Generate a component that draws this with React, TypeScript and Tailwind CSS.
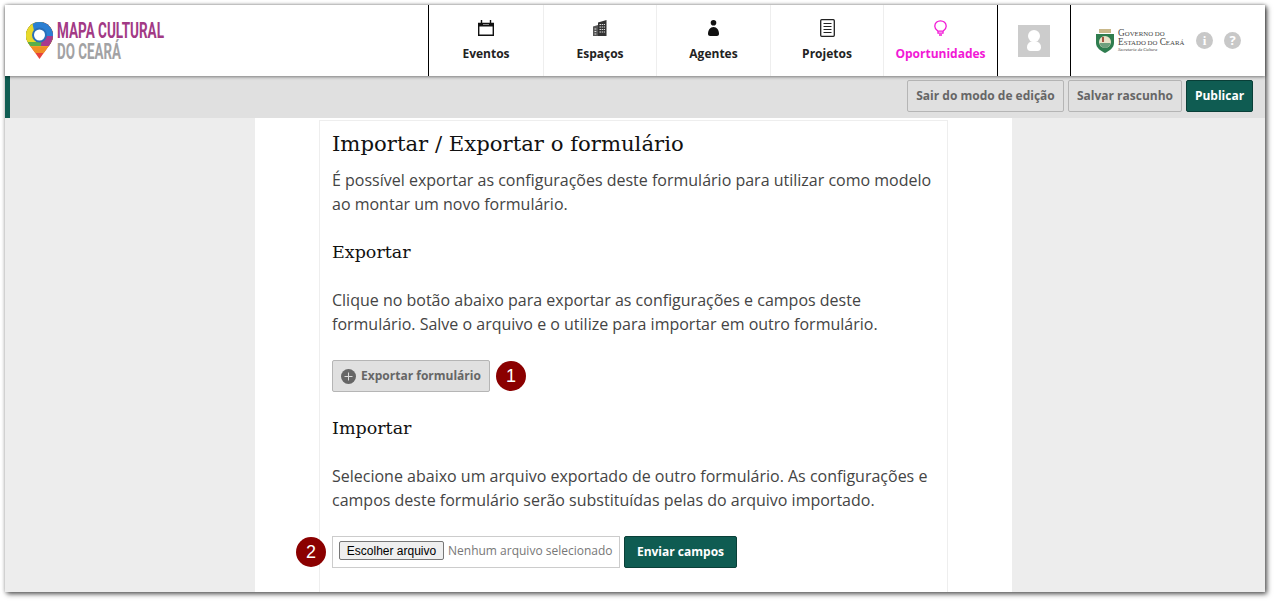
const navItems = [
  { label: "Eventos", icon: <CalendarIcon />, width: "w-[115px]" },
  { label: "Espaços", icon: <BuildingIcon />, width: "w-[113px]" },
  { label: "Agentes", icon: <PersonIcon />, width: "w-[114px]" },
  { label: "Projetos", icon: <DocIcon />, width: "w-[113px]" },
];

function CalendarIcon() {
  return (
    <svg width="16" height="16" viewBox="0 0 16 16" fill="none" stroke="#111">
      <path d="M.7 3.500h14.600v11.800H.7z" strokeWidth="1.400" />
      <path d="M.5 3.500h15v3H.5z" fill="#111" stroke="none" />
      <path d="M3.500 0v5M12.500 0v5" strokeWidth="1.400" />
      <path d="M5 4.500h6" stroke="#888" strokeWidth="1" />
    </svg>
  );
}

function BuildingIcon() {
  return (
    <svg width="14" height="16" viewBox="0 0 14 16" fill="none">
      <path d="M5 16V2.500L13.500 0v16z" fill="#333" />
      <path d="M0 16V6.500L5 5v11z" fill="#555" />
      <path d="M6.500 4.500h5.500M6.500 7h5.500M6.500 9.500h5.500M6.500 12h5.500M1.500 9h2.500M1.500 11.500h2.500M1.500 14h2.500" stroke="#ddd" strokeWidth="1" strokeDasharray="1.500 .7" />
    </svg>
  );
}

function PersonIcon() {
  return (
    <svg width="11" height="16" viewBox="0 0 11 16" fill="#111">
      <circle cx="5.500" cy="2.800" r="2.800" />
      <path d="M5.500 7c3.300 0 5.500 3 5.500 7 0 1.200-1 2-2 2H2c-1 0-2-.8-2-2 0-4 2.200-7 5.500-7z" />
    </svg>
  );
}

function DocIcon() {
  return (
    <svg width="15" height="18" viewBox="0 0 15 18" fill="none" stroke="#222">
      <rect x="0.700" y="0.700" width="13.600" height="16.600" rx="1" strokeWidth="1.300" />
      <path d="M3.500 4.500h8M3.500 7.500h8M3.500 10.500h8M3.500 13.500h8" strokeWidth="1" />
    </svg>
  );
}

function BulbIcon() {
  return (
    <svg width="13" height="16" viewBox="0 0 13 16" fill="none" stroke="#f218d6" strokeWidth="1.300">
      <path d="M4 11.200C2.500 9.800.8 8.800.8 6.200.8 3.100 3.300.8 6.500.8s5.700 2.300 5.700 5.400c0 2.600-1.700 3.600-3.200 5z" />
      <path d="M4 11.200v2h5v-2M5 15h3" />
    </svg>
  );
}

function Logo() {
  return (
    <svg width="150" height="44" viewBox="0 0 150 44" className="block overflow-visible">
      <defs>
        <clipPath id="pin">
          <path d="M13.500 1C6 1 0 7 0 14.500c0 3 1 5.500 2.500 8L13.500 38l11-15.500c1.500-2.500 2.500-5 2.500-8C27 7 21 1 13.500 1z" />
        </clipPath>
      </defs>
      <g clipPath="url(#pin)">
        <rect width="27" height="38" fill="#e8423c" />
        <rect width="27" height="32" fill="#ef8f25" />
        <rect width="27" height="26" fill="#ef9f2c" />
        <path d="M0 0h27v25H0z" fill="#57b04a" />
        <path d="M17 0h10v25H15z" fill="#a83a8e" />
        <path d="M0 0h9l1 21H0z" fill="#e9d92a" />
        <path d="M6 0h21v15H18C18 10 12 8 8 10z" fill="#2b7fd2" />
      </g>
      <circle cx="13.500" cy="14" r="6.500" fill="#fff" stroke="#2a6fb8" strokeWidth="2" />
      <text x="31" y="17" textLength="107" lengthAdjust="spacingAndGlyphs" fontFamily="Roboto, sans-serif" fontWeight="700" fontSize="22" fill="#a23a85">
        MAPA CULTURAL
      </text>
      <text x="31" y="38" textLength="64" lengthAdjust="spacingAndGlyphs" fontFamily="Roboto, sans-serif" fontWeight="700" fontSize="22" fill="#a2a2a4">
        DO CEARÁ
      </text>
    </svg>
  );
}

function GovLogo() {
  return (
    <div className="flex items-center gap-[3px]">
      <svg width="20" height="24" viewBox="0 0 20 24">
        <rect x="4" y="0" width="12" height="4" fill="#c9b88a" />
        <path d="M1 5h18v9c0 5-5 8-9 10-4-2-9-5-9-10z" fill="#2f7d4f" />
        <circle cx="10" cy="13" r="6" fill="#e8e2c8" />
        <path d="M4.500 14h11c-.5 3-3 5-5.500 5s-5-2-5.500-5z" fill="#6d9f7c" />
        <path d="M7 8h2v5H7z" fill="#a5553f" />
      </svg>
      <div className="w-[67px] font-['Liberation_Serif',serif] leading-none text-[#444]">
        <div className="text-[9.300px] leading-[9px]">
          G<span className="text-[6.800px]">OVERNO DO</span>
        </div>
        <div className="whitespace-nowrap text-[9.300px] leading-[9px]">
          E<span className="text-[6.800px]">STADO DO</span> C<span className="text-[6.800px]">EARÁ</span>
        </div>
        <div className="text-[4.500px] leading-[6px] italic">Secretaria da Cultura</div>
      </div>
    </div>
  );
}

function RoundIcon({ glyph, serif }: { glyph: string; serif?: boolean }) {
  return (
    <div
      className={`flex size-[17px] items-center justify-center rounded-full bg-[#c8c8c8] text-[13px] font-bold text-white ${
        serif ? "font-['Liberation_Serif',serif]" : ""
      }`}
    >
      {glyph}
    </div>
  );
}

function Badge({ n, className }: { n: number; className?: string }) {
  return (
    <div
      className={`flex size-[30px] items-center justify-center rounded-full bg-[#8b0000] font-['Liberation_Sans',sans-serif] text-[18px] text-white ${className ?? ""}`}
    >
      {n}
    </div>
  );
}

export default function App() {
  return (
    <div className="h-[601px] w-[1277px] overflow-hidden bg-white pl-[5px] pt-[5px] font-['Open_Sans',sans-serif]">
      <div className="flex h-[587px] w-[1260px] flex-col shadow-[2px_2px_5px_rgba(0,0,0,0.65),0_0_4px_rgba(0,0,0,0.2)]">
        <header className="relative z-10 flex h-[71px] shrink-0 bg-white shadow-[0_1px_3px_rgba(0,0,0,0.45)]">
          <div className="w-[423px] pl-[21px] pt-[16px]">
            <Logo />
          </div>
          <nav className="flex border-x border-black">
            {navItems.map((item) => (
              <div
                key={item.label}
                className={`flex flex-col items-center border-r border-[#eee] pt-[14px] ${item.width}`}
              >
                <div className="flex h-[18px] items-center">{item.icon}</div>
                <div className="mt-[8px] text-[12px] leading-[18px] font-bold text-[#222]">{item.label}</div>
              </div>
            ))}
            <div className="flex w-[113px] flex-col items-center pt-[14px]">
              <div className="flex h-[18px] items-center">
                <BulbIcon />
              </div>
              <div className="mt-[8px] text-[12px] leading-[18px] font-bold text-[#f218d6]">Oportunidades</div>
            </div>
          </nav>
          <div className="flex w-[73px] items-center justify-center border-r border-black">
            <div className="flex size-[32px] flex-col items-center justify-center bg-[#ccc]">
              <div className="size-[12px] rounded-full bg-white" />
              <div className="mt-[-1px] h-[10px] w-[14px] rounded-t-[7px] rounded-b-[4px] bg-white" />
            </div>
          </div>
          <div className="flex flex-1 items-center pl-[24px]">
            <GovLogo />
            <div className="ml-[11px] flex gap-[11px]">
              <RoundIcon glyph="i" serif />
              <RoundIcon glyph="?" />
            </div>
          </div>
        </header>
        <div className="flex h-[42px] shrink-0 items-start justify-end gap-[4px] border-l-[5px] border-[#0f5c52] bg-[#e0e0e0] pr-[12px] pt-[4px]">
          <button className="h-[32px] w-[157px] rounded-[2px] border border-[#b5b5b5] bg-[#e0e0e0] text-[12px] font-bold text-[#666]">
            Sair do modo de edição
          </button>
          <button className="h-[32px] w-[114px] rounded-[2px] border border-[#b5b5b5] bg-[#e0e0e0] text-[12px] font-bold text-[#666]">
            Salvar rascunho
          </button>
          <button className="h-[32px] w-[67px] rounded-[2px] border border-[#0a3f38] bg-[#0f5c52] text-[12px] font-bold text-white">
            Publicar
          </button>
        </div>
        <div className="flex min-h-0 flex-1 justify-center bg-[#ededed]">
          <main className="mr-[3px] w-[757px] bg-white pl-[64px]">
            <div className="relative mt-[2px] h-[472px] w-[629px] border-x border-t border-[#eee] pl-[12px] pr-[12px] text-[16px] leading-[24px] text-[#444]">
              <h1 className="mt-[7px] font-['DejaVu_Serif',serif] text-[21.200px] leading-[32px] text-[#111]">
                Importar / Exportar o formulário
              </h1>
              <p className="mt-[8px] whitespace-nowrap">
                É possível exportar as configurações deste formulário para utilizar como modelo
                <br />
                ao montar um novo formulário.
              </p>
              <h2 className="mt-[22px] font-['DejaVu_Serif',serif] text-[17.500px] leading-[28px] text-[#111]">Exportar</h2>
              <p className="mt-[22px] whitespace-nowrap">
                Clique no botão abaixo para exportar as configurações e campos deste
                <br />
                formulário. Salve o arquivo e o utilize para importar em outro formulário.
              </p>
              <div className="mt-[24px] flex items-center gap-[6px]">
                <button className="flex h-[32px] w-[158px] items-center justify-center gap-[5px] rounded-[2px] border border-[#b5b5b5] bg-[#e0e0e0] text-[12px] font-bold text-[#666]">
                  <svg width="15" height="15" viewBox="0 0 15 15">
                    <circle cx="7.500" cy="7.500" r="7.500" fill="#666" />
                    <path d="M7.500 3.500v8M3.500 7.500h8" stroke="#ddd" strokeWidth="1" />
                  </svg>
                  Exportar formulário
                </button>
                <Badge n={1} />
              </div>
              <h2 className="mt-[22px] font-['DejaVu_Serif',serif] text-[17.500px] leading-[28px] text-[#111]">Importar</h2>
              <p className="mt-[22px] whitespace-nowrap">
                Selecione abaixo um arquivo exportado de outro formulário. As configurações e
                <br />
                campos deste formulário serão substituídas pelas do arquivo importado.
              </p>
              <div className="mt-[24px] flex items-center gap-[4px]">
                <Badge n={2} className="absolute left-[-24px]" />
                <div className="flex h-[32px] w-[288px] items-start gap-[4px] border border-[#ccc] pl-[6px] pt-[4px]">
                  <span className="flex h-[19px] w-[105px] items-center justify-center rounded-[2px] border border-[#777] bg-[#efefef] font-['Liberation_Sans',sans-serif] text-[12px] text-black">
                    Escolher arquivo
                  </span>
                  <span className="text-[12px] leading-[19px] text-[#777]">Nenhum arquivo selecionado</span>
                </div>
                <button className="h-[32px] w-[113px] rounded-[2px] border border-[#0a3f38] bg-[#0f5c52] text-[12px] font-bold text-white">
                  Enviar campos
                </button>
              </div>
            </div>
          </main>
        </div>
      </div>
    </div>
  );
}
